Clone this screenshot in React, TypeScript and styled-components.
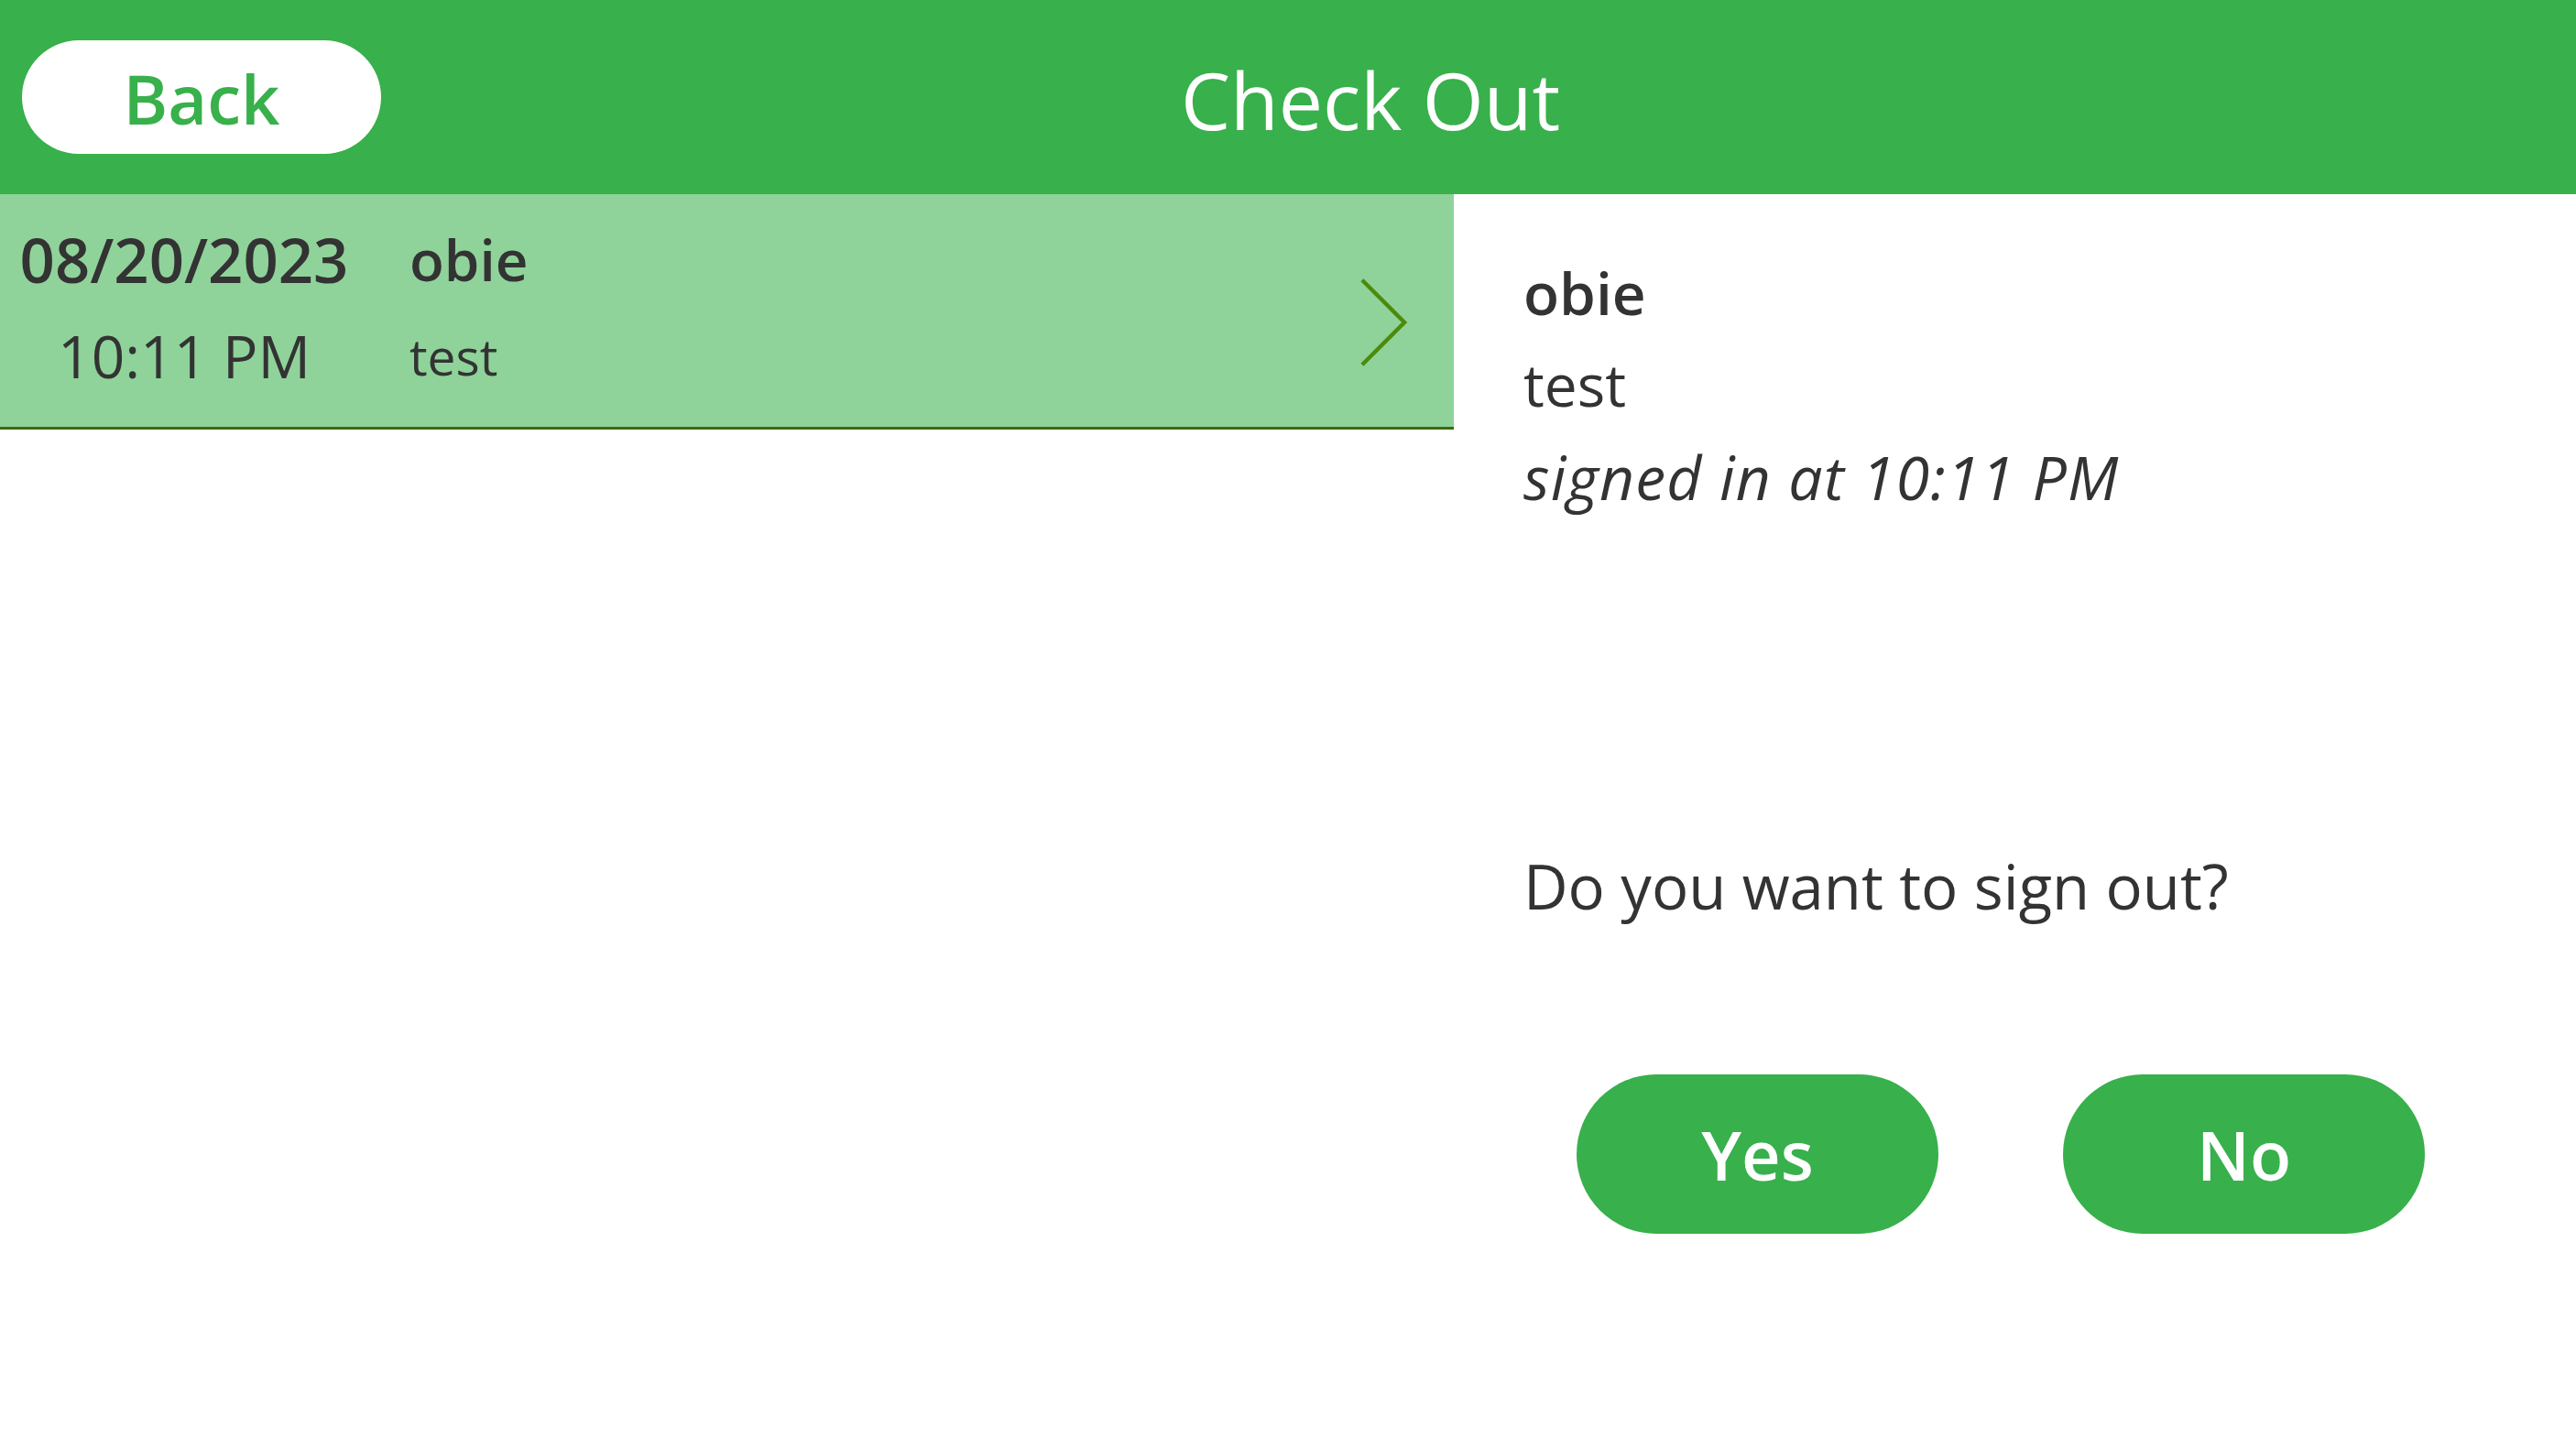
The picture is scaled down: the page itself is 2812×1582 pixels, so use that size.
import React from "react";
import styled, { createGlobalStyle } from "styled-components";

const GlobalStyle = createGlobalStyle`
  html, body {
    margin: 0;
    padding: 0;
    height: 100%;
    background: #ffffff;
  }
  body {
    font-family: "Open Sans", "Noto Sans", sans-serif;
    color: #333333;
  }
  #root {
    min-height: 100%;
  }
`;

type Visit = {
    date: string;
    time: string;
    name: string;
    note: string;
};

const visit: Visit = {
    date: "08/20/2023",
    time: "10:11 PM",
    name: "obie",
    note: "test",
};

const App = () => {
    return (
        <Page>
            <GlobalStyle />
            <Header>
                <BackButton>Back</BackButton>
                <Title>Check Out</Title>
            </Header>
            <Body>
                <ListPanel>
                    <VisitRow>
                        <DateColumn>
                            <DateText>{visit.date}</DateText>
                            <TimeText>{visit.time}</TimeText>
                        </DateColumn>
                        <NameColumn>
                            <NameText>{visit.name}</NameText>
                            <NoteText>{visit.note}</NoteText>
                        </NameColumn>
                        <Chevron viewBox="0 0 54 100">
                            <polyline points="2,2 50,50 2,98" />
                        </Chevron>
                    </VisitRow>
                </ListPanel>
                <DetailPanel>
                    <DetailName>{visit.name}</DetailName>
                    <DetailLine>{visit.note}</DetailLine>
                    <DetailLine italic>signed in at {visit.time}</DetailLine>
                    <Question>Do you want to sign out?</Question>
                    <ButtonRow>
                        <ChoiceButton>Yes</ChoiceButton>
                        <ChoiceButton>No</ChoiceButton>
                    </ButtonRow>
                </DetailPanel>
            </Body>
        </Page>
    );
};

const Page = styled.div`
    display: flex;
    flex-direction: column;
    min-height: 1582px;
`;

const Header = styled.div`
    display: flex;
    align-items: center;
    height: 212px;
    padding-left: 24px;
    background-color: #38b04b;
    box-sizing: border-box;
`;

const BackButton = styled.button`
    width: 392px;
    height: 124px;
    border: none;
    border-radius: 62px;
    background-color: #ffffff;
    color: #38b04b;
    font-family: "Open Sans", "Noto Sans", sans-serif;
    font-size: 74px;
    font-weight: 600;
    padding: 2px 0 0;
    cursor: pointer;
`;

const Title = styled.div`
    flex: 1;
    text-align: center;
    padding: 0 236px 0 0;
    margin-top: 4px;
    color: #ffffff;
    font-size: 86px;
    font-weight: 400;
`;

const Body = styled.div`
    display: flex;
    flex: 1;
`;

const ListPanel = styled.div`
    width: 1587px;
    display: flex;
    flex-direction: column;
`;

const VisitRow = styled.div`
    display: flex;
    align-items: flex-start;
    height: 257px;
    padding: 18px 50px 0 18px;
    background-color: #8fd39a;
    border-bottom: 3px solid #3e6a10;
    box-sizing: border-box;
`;

const DateColumn = styled.div`
    display: flex;
    flex-direction: column;
    align-items: center;
    width: 366px;
`;

const DateText = styled.div`
    font-size: 67px;
    font-weight: 600;
    line-height: 106px;
`;

const TimeText = styled.div`
    font-size: 64px;
    font-weight: 400;
    line-height: 106px;
`;

const NameColumn = styled.div`
    display: flex;
    flex-direction: column;
    margin-left: 63px;
`;

const NameText = styled.div`
    font-size: 62px;
    font-weight: 600;
    line-height: 106px;
`;

const NoteText = styled.div`
    font-size: 55px;
    font-weight: 400;
    line-height: 106px;
`;

const Chevron = styled.svg`
    width: 52px;
    height: 98px;
    margin-left: auto;
    margin-top: 73px;
    fill: none;
    stroke: #4b8a0c;
    stroke-width: 4.5;
`;

const DetailPanel = styled.div`
    flex: 1;
    display: flex;
    flex-direction: column;
    padding: 58px 0 0 76px;
`;

const DetailName = styled.div`
    font-size: 64px;
    font-weight: 600;
    line-height: 100px;
`;

const DetailLine = styled.div<{ italic?: boolean }>`
    font-size: ${({ italic }) => (italic ? "66px" : "64px")};
    font-weight: 400;
    font-style: ${({ italic }) => (italic ? "italic" : "normal")};
    letter-spacing: ${({ italic }) => (italic ? "1.2px" : "0")};
    line-height: 100px;
`;

const Question = styled.div`
    margin-top: 347px;
    font-size: 67px;
    line-height: 100px;
`;

const ButtonRow = styled.div`
    display: flex;
    gap: 136px;
    margin-top: 156px;
    padding-left: 58px;
`;

const ChoiceButton = styled.button`
    width: 395px;
    height: 174px;
    border: none;
    border-radius: 87px;
    background-color: #38b04b;
    color: #ffffff;
    font-family: "Open Sans", "Noto Sans", sans-serif;
    font-size: 74px;
    font-weight: 600;
    padding: 0;
    cursor: pointer;
`;

export default App;
